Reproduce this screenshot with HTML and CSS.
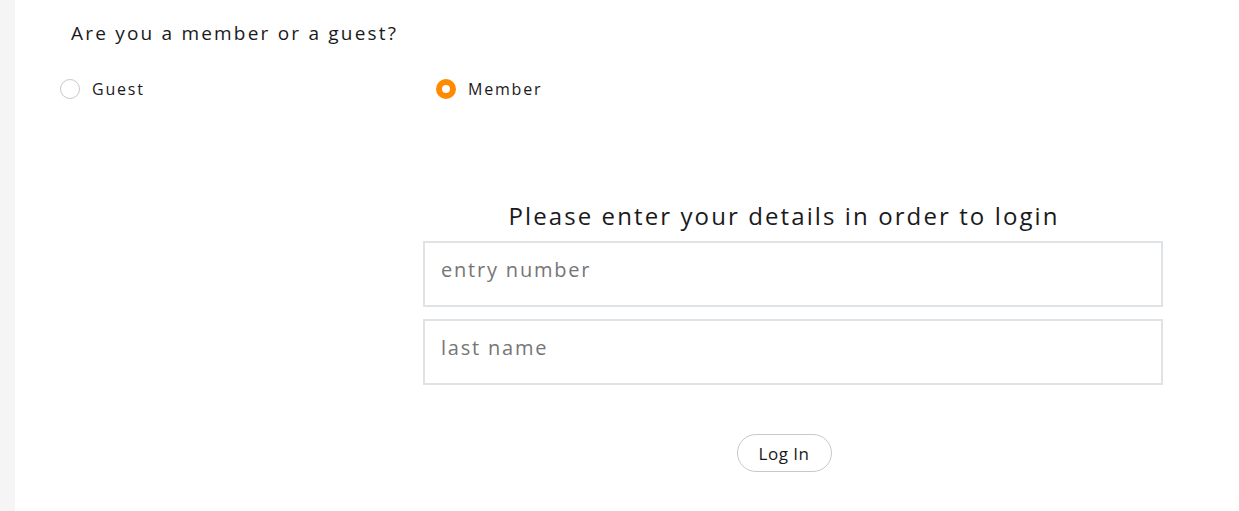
FILE: index.html
```html
<!DOCTYPE html>
<html lang="en">
<head>
    <meta charset="UTF-8">
    <title>Login</title>
    <link rel="stylesheet" href="styles.css">
</head>
<body>
    <div class="sidebar"></div>
    <div class="main">
        <h2 class="question">Are you a member or a guest?</h2>
        <div class="choices">
            <label class="choice">
                <span class="radio"></span>
                <span class="choice-label">Guest</span>
            </label>
            <label class="choice">
                <span class="radio checked"></span>
                <span class="choice-label">Member</span>
            </label>
        </div>
        <form class="login">
            <h3 class="login-title">Please enter your details in order to login</h3>
            <input type="text" class="field" placeholder="entry number">
            <input type="text" class="field" placeholder="last name">
            <div class="button-row">
                <button type="button" class="login-btn">Log In</button>
            </div>
        </form>
    </div>
</body>
</html>
```

FILE: styles.css
```css
body {
    margin: 0;
    font-family: "Open Sans", Lato, sans-serif;
    color: #1a1a1c;
    background-color: #fff;
    display: flex;
    height: 511px;
    overflow: hidden;
}
.sidebar {
    width: 15px;
    background-color: #f5f5f5;
    flex-shrink: 0;
}
.main {
    flex: 1;
}
.question {
    margin: 20px 0 0 56px;
    font-size: 19px;
    font-weight: normal;
    letter-spacing: 2.2px;
}
.choices {
    display: flex;
    margin: 32px 0 0 45px;
}
.choice {
    display: flex;
    align-items: center;
    gap: 12px;
    width: 376px;
    font-size: 16px;
    letter-spacing: 1.8px;
}
.radio {
    width: 18px;
    height: 18px;
    border: 1px solid #c8c8c8;
    border-radius: 50%;
    box-sizing: content-box;
}
.radio.checked {
    width: 8px;
    height: 8px;
    border: 6px solid #ff8a00;
}
.login {
    width: 740px;
    margin: 99px 0 0 408px;
}
.login-title {
    margin: 0 18px 9px 0;
    text-align: center;
    font-size: 24px;
    font-weight: normal;
    letter-spacing: 2.1px;
}
.field {
    display: block;
    width: 740px;
    height: 66px;
    box-sizing: border-box;
    margin-bottom: 12px;
    padding: 0 16px 10px;
    border: 2px solid #e0e3e6;
    font-family: inherit;
    font-size: 20px;
    letter-spacing: 1.8px;
    color: #333;
}
.field::placeholder {
    color: #767676;
}
.button-row {
    display: flex;
    justify-content: center;
    margin: 49px 18px 0 0;
}
.login-btn {
    width: 95px;
    height: 38px;
    border: 1px solid #c9c9c9;
    border-radius: 19px;
    background-color: #fff;
    font-family: inherit;
    font-size: 17px;
    letter-spacing: 0.5px;
    color: #1a1a1c;
}
```
